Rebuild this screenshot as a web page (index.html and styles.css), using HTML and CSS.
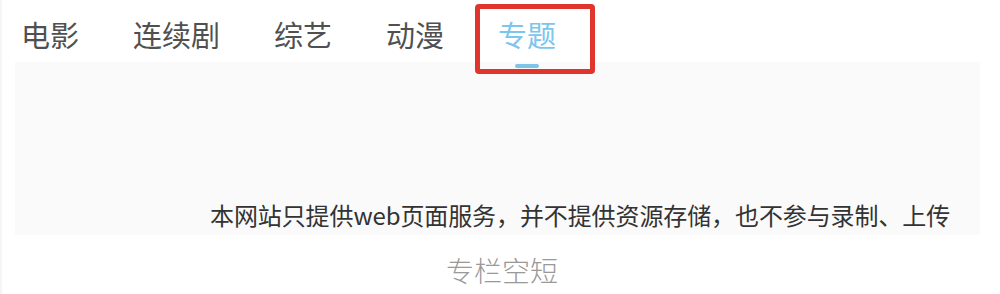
FILE: index.html
```html
<!DOCTYPE html>
<html lang="zh-CN">
<head>
<meta charset="utf-8">
<title>专题</title>
<link rel="stylesheet" href="styles.css">
</head>
<body>
<div class="page">
  <nav class="tabs">
    <span class="tab">电影</span>
    <span class="tab">连续剧</span>
    <span class="tab">综艺</span>
    <span class="tab">动漫</span>
    <span class="tab active">专题<span class="highlight"></span></span>
  </nav>
  <section class="panel">
    <p class="notice">本网站只提供web页面服务，并不提供资源存储，也不参与录制、上传</p>
  </section>
  <p class="empty">专栏空短</p>
</div>
</body>
</html>
```

FILE: styles.css
```css
html, body {
  margin: 0;
  padding: 0;
  background: #ffffff;
}

body {
  font-family: "Noto Sans CJK SC", "Noto Sans", sans-serif;
}

.page {
  width: 1000px;
  height: 294px;
  box-sizing: border-box;
  border-left: 2px solid #f5f5f5;
  overflow: hidden;
}

.tabs {
  display: flex;
  gap: 54px;
  height: 62px;
  box-sizing: border-box;
  padding: 20px 0 0 19px;
}

.tab {
  position: relative;
  font-size: 29px;
  line-height: 29px;
  height: 29px;
  color: #505050;
  white-space: nowrap;
}

.tab.active {
  color: #7cc6ee;
}

.tab.active::after {
  content: "";
  position: absolute;
  left: 50%;
  top: 44px;
  width: 24px;
  height: 4px;
  margin-left: -12px;
  border-radius: 2px;
  background: #80c3e8;
}

.highlight {
  position: absolute;
  left: -23px;
  top: -16px;
  width: 120px;
  height: 70px;
  box-sizing: border-box;
  border: 5px solid #e0352d;
  border-radius: 4px;
}

.panel {
  margin: 0 20px 0 13px;
  height: 173px;
  box-sizing: border-box;
  background: #fafafa;
  display: flex;
  flex-direction: column;
  justify-content: flex-end;
  padding: 0 0 8px 195px;
}

.notice {
  margin: 0;
  font-size: 24px;
  line-height: 24px;
  font-weight: 400;
  letter-spacing: -0.1px;
  color: #333333;
  white-space: nowrap;
}

.empty {
  margin: 21px 0 0;
  text-align: center;
  font-size: 28px;
  line-height: 28px;
  font-weight: 300;
  color: #999999;
  padding-left: 2px;
}
```
